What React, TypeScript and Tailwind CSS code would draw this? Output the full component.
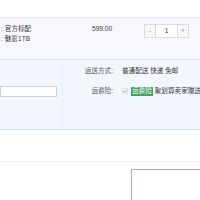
import React from "react";

const font = "font-['Liberation_Sans','Noto_Sans_CJK_SC',sans-serif]";

const QtyBox = () => (
  <div className="mt-[6px] flex h-[14px] w-[45px] shrink-0 border border-[#dcdcdc] bg-white text-[#999]">
    <div className="flex w-[11px] items-center justify-center border-r border-[#dcdcdc] bg-[#f7f7f7]">-</div>
    <div className="flex flex-1 items-center justify-center text-[#3c3c3c]">1</div>
    <div className="flex w-[11px] items-center justify-center border-l border-[#dcdcdc] bg-[#f7f7f7]">+</div>
  </div>
);

const Check = () => (
  <svg width="6" height="6" viewBox="0 0 6 6" className="mr-[3px] shrink-0">
    <rect x="0.5" y="0.5" width="5" height="5" fill="#fff" stroke="#e2e2e2" />
    <path d="M1.4 3.1 L2.6 4.3 L4.7 1.6" fill="none" stroke="#8a8a8a" strokeWidth="0.9" />
  </svg>
);

export default function App() {
  return (
    <div className={`${font} h-[200px] w-[200px] overflow-hidden bg-white text-[6.6px] text-[#3c3c3c]`}>
      <div className="h-[18px] border-b border-[#e4e6ea] bg-white" />

      {/* item row */}
      <div className="flex h-[41px] bg-[#f6f8fe]">
        <div className="w-[92px] shrink-0 pt-[6px] leading-[10px]">
          <div className="flex">
            <span className="ml-[1px] text-[#666]">:</span>
            <span className="ml-[2px]">官方标配</span>
          </div>
          <div className="flex">
            <span className="ml-[1px] text-[#666]">:</span>
            <span className="ml-[2px]">魅影1TB</span>
          </div>
        </div>
        <div className="w-[52px] shrink-0 pt-[6px] leading-[10px]">599.00</div>
        <QtyBox />
      </div>

      {/* order info */}
      <div className="flex h-[71px] border-t border-b border-[#dae2ee] bg-[#f2f6fd]">
        <div className="w-[63px] shrink-0 border-r border-[#e9eef8] pt-[26px]">
          <div className="h-[11px] w-[57px] border border-[#cfd3d9] bg-white" />
        </div>
        <div className="min-w-0 flex-1 overflow-hidden pt-[6px] leading-[10px]">
          <div className="flex h-[10px] items-center whitespace-nowrap">
            <span className="w-[50px] shrink-0 text-right text-[#555]">运送方式:</span>
            <span className="ml-[9px] shrink-0">普通配送 快递 免邮</span>
          </div>
          <div className="mt-[10px] flex h-[10px] items-center whitespace-nowrap">
            <span className="w-[50px] shrink-0 text-right text-[#555]">运费险:</span>
            <span className="ml-[9px] flex shrink-0 items-center">
              <Check />
              <span className="mr-[2px] shrink-0 bg-[#45a05b] px-[1px] py-[0.5px] leading-[8px] text-white">运费险</span>
              <span className="shrink-0">聚划算卖家赠送</span>
            </span>
          </div>
        </div>
      </div>

      <div className="h-[32px] border-b border-[#f0f1f3] bg-white" />

      <div className="ml-[131px] mt-[7px] h-[40px] w-[80px] border border-[#d69ca5] bg-white" />
    </div>
  );
}
